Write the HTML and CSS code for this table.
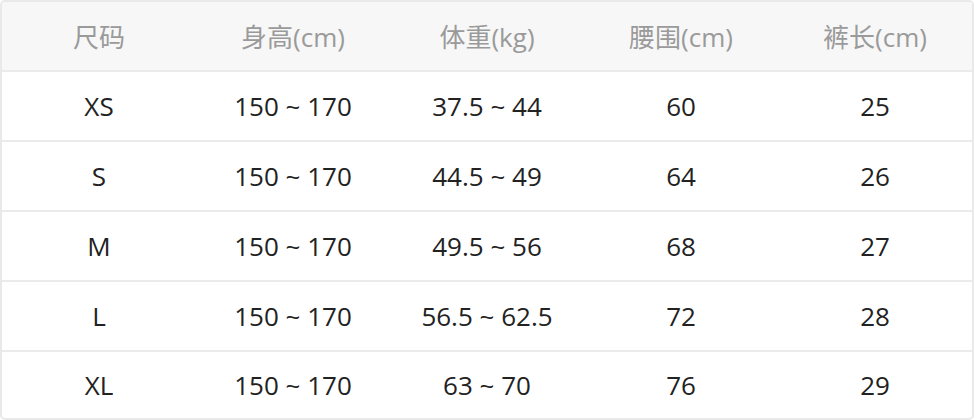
FILE: index.html
```html
<!DOCTYPE html>
<html lang="zh-CN">
<head>
<meta charset="utf-8">
<title>尺码表</title>
<link rel="stylesheet" href="styles.css">
</head>
<body>
<div class="size-table">
  <div class="row head">
    <div class="cell">尺码</div>
    <div class="cell">身高(cm)</div>
    <div class="cell">体重(kg)</div>
    <div class="cell">腰围(cm)</div>
    <div class="cell">裤长(cm)</div>
  </div>
  <div class="row">
    <div class="cell">XS</div>
    <div class="cell">150 ~ 170</div>
    <div class="cell">37.5 ~ 44</div>
    <div class="cell">60</div>
    <div class="cell">25</div>
  </div>
  <div class="row">
    <div class="cell">S</div>
    <div class="cell">150 ~ 170</div>
    <div class="cell">44.5 ~ 49</div>
    <div class="cell">64</div>
    <div class="cell">26</div>
  </div>
  <div class="row">
    <div class="cell">M</div>
    <div class="cell">150 ~ 170</div>
    <div class="cell">49.5 ~ 56</div>
    <div class="cell">68</div>
    <div class="cell">27</div>
  </div>
  <div class="row">
    <div class="cell">L</div>
    <div class="cell">150 ~ 170</div>
    <div class="cell">56.5 ~ 62.5</div>
    <div class="cell">72</div>
    <div class="cell">28</div>
  </div>
  <div class="row last">
    <div class="cell">XL</div>
    <div class="cell">150 ~ 170</div>
    <div class="cell">63 ~ 70</div>
    <div class="cell">76</div>
    <div class="cell">29</div>
  </div>
</div>
</body>
</html>
```
FILE: styles.css
```css
html, body {
  margin: 0;
  padding: 0;
  background: #ffffff;
}
.size-table {
  width: 974px;
  box-sizing: border-box;
  border: 2px solid #e9e9e9;
  border-radius: 5px;
  overflow: hidden;
  font-family: "Open Sans", "Noto Sans CJK SC", sans-serif;
  font-size: 26px;
  color: #222222;
}
.row {
  display: grid;
  grid-template-columns: repeat(5, 1fr);
  height: 68px;
  border-top: 2px solid #ebebeb;
}
.row.head {
  border-top: none;
  background: #f7f7f7;
  color: #9a9a9a;
}
.row.last {
  height: 66px;
}
.cell {
  display: flex;
  align-items: center;
  justify-content: center;
  white-space: nowrap;
}
```
